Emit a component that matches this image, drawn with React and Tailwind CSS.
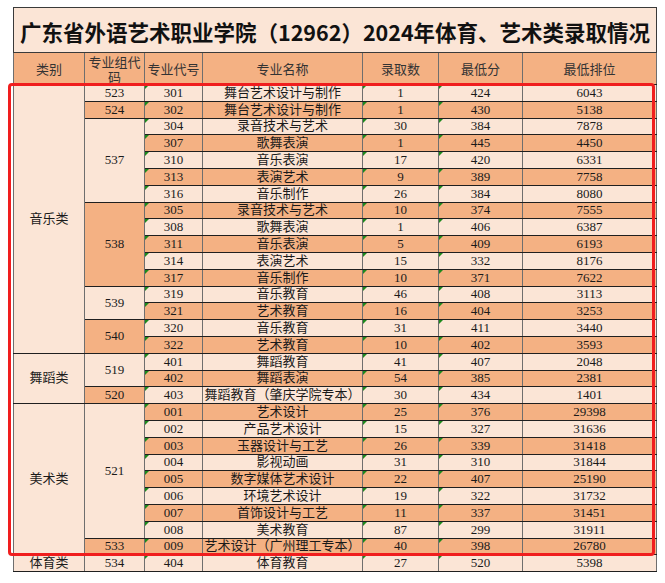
import React from 'react';

// 录取数据：每行一个专业，cat/grp 只在合并单元格的第一行给出
const rows = [
  { cat: '音乐类', catSpan: 16, grp: '523', grpSpan: 1, code: '301', name: '舞台艺术设计与制作', n: '1', min: '424', rank: '6043' },
  { grp: '524', grpSpan: 1, code: '302', name: '舞台艺术设计与制作', n: '1', min: '430', rank: '5138' },
  { grp: '537', grpSpan: 5, code: '304', name: '录音技术与艺术', n: '30', min: '384', rank: '7878' },
  { code: '307', name: '歌舞表演', n: '1', min: '445', rank: '4450' },
  { code: '310', name: '音乐表演', n: '17', min: '420', rank: '6331' },
  { code: '313', name: '表演艺术', n: '9', min: '389', rank: '7758' },
  { code: '316', name: '音乐制作', n: '26', min: '384', rank: '8080' },
  { grp: '538', grpSpan: 5, code: '305', name: '录音技术与艺术', n: '10', min: '374', rank: '7555' },
  { code: '308', name: '歌舞表演', n: '1', min: '406', rank: '6387' },
  { code: '311', name: '音乐表演', n: '5', min: '409', rank: '6193' },
  { code: '314', name: '表演艺术', n: '15', min: '332', rank: '8176' },
  { code: '317', name: '音乐制作', n: '10', min: '371', rank: '7622' },
  { grp: '539', grpSpan: 2, code: '319', name: '音乐教育', n: '46', min: '408', rank: '3113' },
  { code: '321', name: '艺术教育', n: '16', min: '404', rank: '3253' },
  { grp: '540', grpSpan: 2, code: '320', name: '音乐教育', n: '31', min: '411', rank: '3440' },
  { code: '322', name: '艺术教育', n: '10', min: '402', rank: '3593' },
  { cat: '舞蹈类', catSpan: 3, grp: '519', grpSpan: 2, code: '401', name: '舞蹈教育', n: '41', min: '407', rank: '2048' },
  { code: '402', name: '舞蹈表演', n: '54', min: '385', rank: '2381' },
  { grp: '520', grpSpan: 1, code: '403', name: '舞蹈教育（肇庆学院专本）', n: '30', min: '434', rank: '1401' },
  { cat: '美术类', catSpan: 9, grp: '521', grpSpan: 8, code: '001', name: '艺术设计', n: '25', min: '376', rank: '29398' },
  { code: '002', name: '产品艺术设计', n: '15', min: '327', rank: '31636' },
  { code: '003', name: '玉器设计与工艺', n: '26', min: '339', rank: '31418' },
  { code: '004', name: '影视动画', n: '31', min: '310', rank: '31844' },
  { code: '005', name: '数字媒体艺术设计', n: '22', min: '407', rank: '25190' },
  { code: '006', name: '环境艺术设计', n: '19', min: '322', rank: '31732' },
  { code: '007', name: '首饰设计与工艺', n: '11', min: '337', rank: '31451' },
  { code: '008', name: '美术教育', n: '87', min: '299', rank: '31911' },
  { grp: '533', grpSpan: 1, code: '009', name: '艺术设计（广州理工专本）', n: '40', min: '398', rank: '26780' },
  { cat: '体育类', catSpan: 1, grp: '534', grpSpan: 1, code: '404', name: '体育教育', n: '27', min: '520', rank: '5398' },
];

// 专业组的底色依次交替
const grpOrange = { '524': true, '538': true, '540': true, '520': true, '533': true };

const cell = 'border-x border-x-[#6e6e6e] border-y border-y-[#1f1f1f] text-center p-0 align-middle';

const Flag = () => (
  <span className="absolute top-0 left-0 w-0 h-0 border-t-[4px] border-t-[#1c8a1c] border-r-[4px] border-r-transparent" />
);

export default function App() {
  return (
    <div className="relative w-[665px] h-[583px] bg-white overflow-hidden">
      <div className="pl-[13px] pt-[7px]">
        <table
          className="table-fixed border-collapse w-[643px] text-[13px] leading-[14px] text-[#1a1a1a]"
          style={{ fontFamily: '"Liberation Serif", "Noto Sans CJK SC", serif' }}
        >
          <colgroup>
            <col className="w-[71px]" />
            <col className="w-[60px]" />
            <col className="w-[58px]" />
            <col className="w-[160px]" />
            <col className="w-[76px]" />
            <col className="w-[84px]" />
            <col className="w-[134px]" />
          </colgroup>
          <thead>
            <tr className="h-[45px]">
              <th
                colSpan={7}
                className="border border-[#3a3a3a] bg-[#fbe5d6] text-center font-bold text-[21.5px] leading-[24px] pt-[4px] text-[#111]"
                style={{ fontFamily: '"Noto Sans CJK SC", sans-serif' }}
              >
                广东省外语艺术职业学院（12962）2024年体育、艺术类录取情况
              </th>
            </tr>
            <tr
              className="h-[32px] bg-[#f4b183] text-[#333] font-normal"
              style={{ fontFamily: '"Noto Sans CJK SC", sans-serif' }}
            >
              <th className={cell + ' font-normal'}>类别</th>
              <th className={cell + ' font-normal leading-[15px]'}>专业组代码</th>
              <th className={cell + ' font-normal'}>专业代号</th>
              <th className={cell + ' font-normal'}>专业名称</th>
              <th className={cell + ' font-normal'}>录取数</th>
              <th className={cell + ' font-normal'}>最低分</th>
              <th className={cell + ' font-normal'}>最低排位</th>
            </tr>
          </thead>
          <tbody>
            {rows.map((r, i) => {
              const rowBg = i % 2 === 0 ? 'bg-[#fbe5d6]' : 'bg-[#f4b183]';
              return (
                <tr key={r.code} className="h-[16.8px]">
                  {r.cat && (
                    <td rowSpan={r.catSpan} className={cell + ' bg-[#fbe5d6]'}>
                      {r.cat}
                    </td>
                  )}
                  {r.grp && (
                    <td rowSpan={r.grpSpan} className={cell + (grpOrange[r.grp] ? ' bg-[#f4b183]' : ' bg-[#fbe5d6]')}>
                      {r.grp}
                    </td>
                  )}
                  <td className={cell + ' relative ' + rowBg}>
                    <Flag />
                    {r.code}
                  </td>
                  <td className={cell + ' whitespace-nowrap ' + rowBg}>{r.name}</td>
                  <td className={cell + ' relative ' + rowBg}>
                    <Flag />
                    {r.n}
                  </td>
                  <td className={cell + ' relative ' + rowBg}>
                    <Flag />
                    {r.min}
                  </td>
                  <td className={cell + ' ' + rowBg}>{r.rank}</td>
                </tr>
              );
            })}
          </tbody>
        </table>
      </div>
      {/* 红色标注框 */}
      <div className="absolute left-[8px] top-[83px] w-[647px] h-[473px] border-[3px] border-[#f01e1e] rounded-[4px] pointer-events-none" />
    </div>
  );
}
